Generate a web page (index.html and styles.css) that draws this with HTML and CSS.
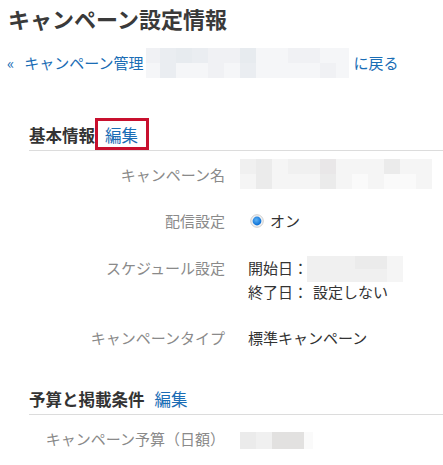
FILE: index.html
```html
<!DOCTYPE html>
<html lang="ja">
<head>
<meta charset="utf-8">
<title>キャンペーン設定情報</title>
<link rel="stylesheet" href="styles.css">
</head>
<body>
<h1 class="title">キャンペーン設定情報</h1>
<p class="back">
  <a class="link" href="#"><span class="raquo">«</span>キャンペーン管理</a><span class="pix pix-back">
    <i class="b1 n"></i><i class="b2"></i><i class="b3"></i><i class="b2"></i><i class="b1"></i><i class="b1"></i><i class="b3"></i><i class="b0"></i><i class="b0"></i><i class="b1"></i><i class="b1"></i><i class="b0"></i><i class="b0 e"></i>
    <i class="b0 n"></i><i class="b2"></i><i class="b0"></i><i class="b0"></i><i class="b1"></i><i class="b0"></i><i class="b2"></i><i class="b0"></i><i class="b0"></i><i class="b0"></i><i class="b0"></i><i class="b1"></i><i class="b0 e"></i>
  </span><a class="link" href="#">に戻る</a>
</p>

<section class="sec sec-first">
  <div class="sec-head">
    <h2 class="sec-title">基本情報</h2>
    <a class="link edit is-marked" href="#">編集</a>
  </div>
  <dl class="rows">
    <div class="row">
      <dt class="label">キャンペーン名</dt>
      <dd class="value">
        <span class="pix pix-name">
          <i class="g1"></i><i class="g2"></i><i class="g0"></i><i class="g1"></i><i class="g1"></i><i class="g3"></i><i class="g0"></i><i class="g0"></i><i class="g0"></i><i class="g2"></i><i class="g0"></i><i class="g0"></i>
          <i class="g0"></i><i class="g2"></i><i class="g0"></i><i class="g0"></i><i class="g0"></i><i class="g2"></i><i class="g0"></i><i class="gw"></i><i class="g0"></i><i class="gw"></i><i class="gw"></i><i class="g0"></i>
        </span>
      </dd>
    </div>
    <div class="row">
      <dt class="label">配信設定</dt>
      <dd class="value">
        <span class="radio">
          <svg width="14" height="14" viewBox="0 0 14 14" aria-hidden="true">
            <defs>
              <radialGradient id="rg" cx="0.42" cy="0.38" r="0.6">
                <stop offset="0" stop-color="#5fb2f3"/>
                <stop offset="1" stop-color="#0a6fd6"/>
              </radialGradient>
            </defs>
            <circle cx="7" cy="7" r="6.3" fill="#f2f2f2" stroke="#c9c9c9" stroke-width="0.9"/>
            <circle cx="7" cy="7" r="4.4" fill="url(#rg)"/>
          </svg>
          オン
        </span>
      </dd>
    </div>
    <div class="row">
      <dt class="label">スケジュール設定</dt>
      <dd class="value">
        <div class="sched">開始日：<span class="pix pix-date">
          <i class="g1"></i><i class="g1"></i><i class="g1"></i><i class="g2"></i><i class="g2"></i><i class="g0"></i>
          <i class="g1"></i><i class="g1"></i><i class="g1"></i><i class="g1"></i><i class="g1"></i><i class="g0"></i>
        </span></div>
        <div class="sched">終了日：<span class="sched-val">設定しない</span></div>
      </dd>
    </div>
    <div class="row">
      <dt class="label">キャンペーンタイプ</dt>
      <dd class="value">標準キャンペーン</dd>
    </div>
  </dl>
</section>

<section class="sec">
  <div class="sec-head">
    <h2 class="sec-title">予算と掲載条件</h2>
    <a class="link edit" href="#">編集</a>
  </div>
  <dl class="rows">
    <div class="row">
      <dt class="label">キャンペーン予算（日額）</dt>
      <dd class="value">
        <span class="pix pix-budget">
          <i class="g2"></i><i class="g1"></i><i class="g4"></i><i class="g4"></i><i class="gw e2"></i>
        </span>
      </dd>
    </div>
  </dl>
</section>
</body>
</html>
```

FILE: styles.css
```css
* { box-sizing: border-box; }

html, body { background: #fff; }

body {
  margin: 0;
  padding: 0 0 0 8px;
  font-family: "Noto Sans CJK JP", "Noto Sans", sans-serif;
  font-size: 15px;
  line-height: 24px;
  color: #333;
  overflow: hidden;
}

.title {
  margin: 4px 0 0;
  font-size: 22px;
  line-height: 28px;
  font-weight: bold;
  color: #3a3a3a;
  letter-spacing: 0;
}

.link {
  color: #1a6db5;
  text-decoration: none;
}

.back {
  margin: 19px 0 0;
  display: flex;
  align-items: center;
  height: 24px;
}

.raquo {
  margin-right: 10px;
  margin-left: -1px;
}

.pix {
  display: grid;
  grid-auto-rows: 15px;
}

.pix i { display: block; }

.pix-back {
  grid-template-columns: 14px repeat(11, 16px) 13px;
  margin: 0 4px 0 3px;
  height: 30px;
}

.pix-name {
  grid-template-columns: repeat(12, 16px);
  margin: -4px 0 -2px -8px;
  width: 192px;
}

.pix-date {
  display: inline-grid;
  grid-template-columns: repeat(6, 16px);
  grid-auto-rows: 13px;
  vertical-align: top;
  margin-bottom: -2px;
  margin-left: -1px;
}

.pix-budget {
  display: inline-grid;
  grid-template-columns: repeat(4, 16px) 9px;
  grid-auto-rows: 17px;
  vertical-align: middle;
  margin: 0 0 0 -8px;
}

.b0 { background: #f5f6f8; }
.b1 { background: #f0f1f4; }
.b2 { background: #eaedf1; }
.b3 { background: #e7ebef; }

.g0 { background: #f5f5f5; }
.g1 { background: #f0f0f0; }
.g2 { background: #ebebeb; }
.g3 { background: #e9e7e8; }
.g4 { background: #e2e1e0; }
.gw { background: #fafafa; }

.sec {
  margin: 48px 0 0 21px;
}

.sec + .sec {
  margin-top: 26px;
}

.sec-head {
  display: flex;
  align-items: baseline;
  border-bottom: 1px solid #dcdcdc;
  padding-bottom: 3px;
}

.sec-title {
  margin: 0;
  font-size: 16.5px;
  line-height: 24px;
  font-weight: bold;
  color: #333;
}

.edit {
  margin-left: 10px;
  font-size: 16.5px;
  position: relative;
}

.edit.is-marked::after {
  content: "";
  position: absolute;
  left: -10px;
  right: -11px;
  top: -5px;
  bottom: -3px;
  border: 3px solid #c8102e;
}

.rows {
  margin: 0;
  padding-top: 1px;
}

.row {
  display: grid;
  grid-template-columns: 196px 1fr;
  column-gap: 23px;
  padding: 11px 0;
}

.label {
  margin: 0;
  text-align: right;
  color: #8a8a8a;
}

.value {
  margin: 0;
  color: #333;
}

.radio {
  display: inline-flex;
  align-items: center;
  gap: 6px;
  margin-left: 2px;
}

.radio svg { display: block; }

.sched-val {
  margin-left: 5px;
}
```
